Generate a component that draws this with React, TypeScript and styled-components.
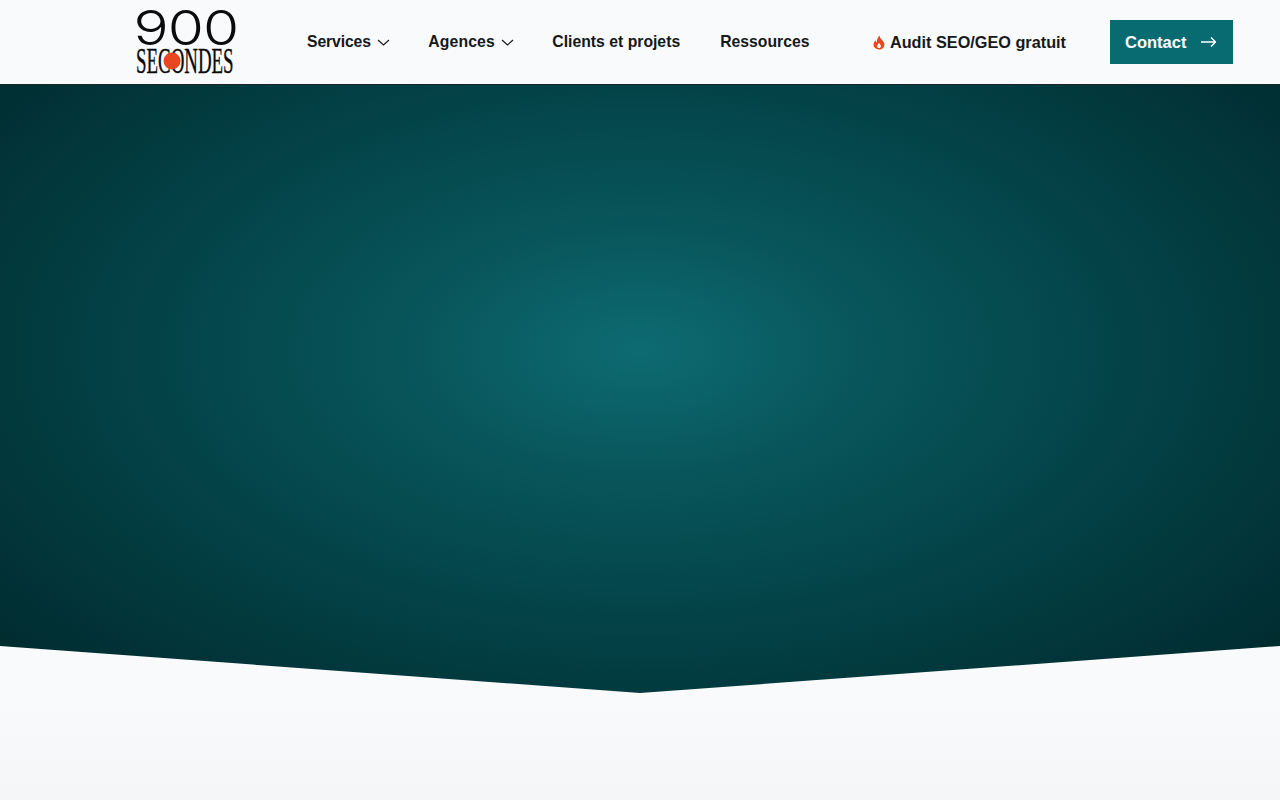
import React from "react";
import styled, { createGlobalStyle } from "styled-components";

const GlobalStyle = createGlobalStyle`
  html, body {
    margin: 0;
    padding: 0;
    height: 100%;
    overflow: hidden;
    background: #f9fafc;
    font-family: "Liberation Sans", Arial, sans-serif;
  }
`;

const Page = styled.div`
  height: 800px;
  display: flex;
  flex-direction: column;
  background: linear-gradient(180deg, #f9fafc 0%, #f9fafc 86%, #f5f6f8 100%);
`;

const Header = styled.header`
  height: 84px;
  flex: none;
  display: flex;
  align-items: center;
  padding: 0 47px 0 136px;
  background: #f9fafc;
`;

const Logo = styled.svg`
  width: 100px;
  height: 66px;
  flex: none;
  margin-right: 71px;
  overflow: hidden;
`;

const LogoDigits = styled.text`
  font-family: "Inter", "Liberation Sans", sans-serif;
  font-size: 48px;
  font-weight: 350;
  fill: #0b0b0b;
`;

const LogoWord = styled.text`
  font-family: "Liberation Serif", serif;
  font-size: 35px;
  fill: #0b0b0b;
  stroke: #0b0b0b;
  stroke-width: 0.4;
`;

const Nav = styled.nav`
  display: flex;
  align-items: center;
  gap: 40px;
  margin-top: -1px;
`;

const NavLink = styled.a<{ $tracking?: number }>`
  display: flex;
  align-items: center;
  gap: 6px;
  color: #161819;
  font-size: 15.75px;
  font-weight: 700;
  line-height: 20px;
  letter-spacing: ${(p) => p.$tracking ?? 0}px;
  text-decoration: none;
  white-space: nowrap;
`;

const Chevron = styled.svg`
  width: 13px;
  height: 7px;
  margin-right: -1.5px;
  margin-top: 2px;
  fill: none;
  stroke: #161819;
  stroke-width: 1.2;
`;

const Actions = styled.div`
  margin-left: auto;
  display: flex;
  align-items: center;
  gap: 44px;
`;

const AuditLink = styled.a`
  display: flex;
  align-items: center;
  gap: 5px;
  color: #161819;
  font-size: 16.25px;
  font-weight: 700;
  line-height: 20px;
  text-decoration: none;
  white-space: nowrap;
`;

const ContactButton = styled.a`
  width: 123px;
  height: 44px;
  box-sizing: border-box;
  padding: 0 17px 0 15px;
  display: flex;
  align-items: center;
  justify-content: space-between;
  background: #096b72;
  color: #ffffff;
  font-size: 16.5px;
  font-weight: 700;
  text-decoration: none;
`;

const Hero = styled.section`
  height: 609px;
  box-sizing: border-box;
  flex: none;
  border-top: 1px solid #1a2728;
  background: radial-gradient(
    ellipse 905px 495px at 640px 265px,
    #0d6b72 0%,
    #08565b 25%,
    #034348 54%,
    #012e32 89%,
    #00262a 100%
  );
  clip-path: polygon(0 0, 100% 0, 100% 562px, 50% 100%, 0 562px);
`;

const ChevronIcon = () => (
  <Chevron viewBox="0 0 13 7" aria-hidden="true">
    <path d="M1 1 6.500 6 12 1" />
  </Chevron>
);

const App = () => (
  <Page>
    <GlobalStyle />
    <Header>
      <Logo viewBox="0 0 100 66" role="img" aria-label="900 Secondes">
        <LogoDigits transform="scale(1.22 1)" x="-2 26 55" y="36">
          900
        </LogoDigits>
        <LogoWord transform="scale(0.54 1)" x="0" y="64">
          SECONDES
        </LogoWord>
        <circle cx="36" cy="52" r="8.500" fill="#e8471f" />
      </Logo>
      <Nav>
        <NavLink href="#" $tracking={-0.12}>
          Services
          <ChevronIcon />
        </NavLink>
        <NavLink href="#" $tracking={0.12}>
          Agences
          <ChevronIcon />
        </NavLink>
        <NavLink href="#">Clients et projets</NavLink>
        <NavLink href="#">Ressources</NavLink>
      </Nav>
      <Actions>
        <AuditLink href="#">
          <svg width="12" height="15" viewBox="0 0 13 16" aria-hidden="true">
            <path
              fill="#e8471f"
              fillRule="evenodd"
              d="M7 0.5c.4 2.3 1.5 3.4 2.8 4.8C11.2 6.8 12.4 8.200 12.400 10.200 12.400 13.500 9.900 15.600 6.500 15.600S.6 13.500.6 10.300C.6 8.300 1.500 6.800 2.900 5.500c.1 1.200.5 2 1.300 2.500C4.100 5.200 5 2.500 7 .5ZM6.500 8.500C5.400 9.800 4.400 10.800 4.400 12.100 4.400 13.300 5.300 14 6.500 14S8.600 13.300 8.600 12.100C8.600 10.800 7.500 9.800 6.500 8.500Z"
            />
          </svg>
          Audit SEO/GEO gratuit
        </AuditLink>
        <ContactButton href="#">
          Contact
          <svg width="15" height="12" viewBox="0 0 15 12" fill="none" stroke="#fff" strokeWidth="1.3" aria-hidden="true">
            <path d="M0 6H14.500M10 1.500 14.500 6 10 10.500" />
          </svg>
        </ContactButton>
      </Actions>
    </Header>
    <Hero />
  </Page>
);

export default App;
